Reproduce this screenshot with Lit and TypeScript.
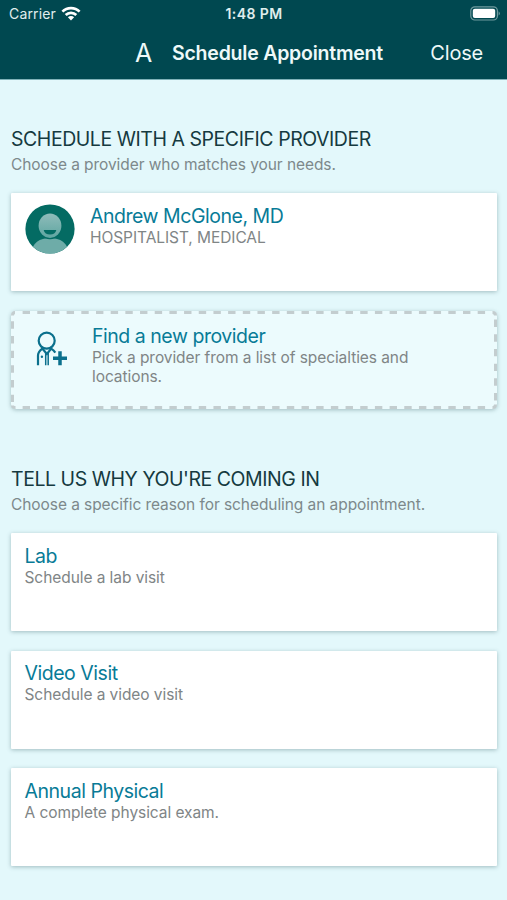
import { LitElement, html, css, svg, nothing } from "lit";
import { customElement, property } from "lit/decorators.js";

interface Reason {
  title: string;
  detail: string;
}

const REASONS: Reason[] = [
  { title: "Lab", detail: "Schedule a lab visit" },
  { title: "Video Visit", detail: "Schedule a video visit" },
  { title: "Annual Physical", detail: "A complete physical exam." },
];

@customElement("status-bar")
class StatusBar extends LitElement {
  static styles = css`
    :host {
      display: grid;
      grid-template-columns: 1fr auto 1fr;
      align-items: center;
      height: 27px;
      padding: 0 8px 0 9px;
      color: #e0eeee;
      font-size: 14px;
      line-height: 20px;
    }
    .left {
      display: flex;
      align-items: center;
      gap: 5px;
      letter-spacing: 0.15px;
    }
    .time {
      font-weight: 600;
      letter-spacing: 0.4px;
    }
    .battery {
      justify-self: end;
      margin-right: -2px;
    }
    svg {
      display: block;
    }
  `;
  render() {
    return html`
      <div class="left">
        <span>Carrier</span>
        <svg width="20" height="15" viewBox="0 0 20 15" fill="none" stroke="#fff" stroke-width="2.7">
          <path d="M1.4 5.6a12.2 12.2 0 0 1 17.2 0" />
          <path d="M4.7 9a7.6 7.6 0 0 1 10.6 0" />
          <path d="M10 14.4L6.9 11.2a4.4 4.4 0 0 1 6.2 0z" fill="#fff" stroke="none" />
        </svg>
      </div>
      <span class="time">1:48 PM</span>
      <svg class="battery" width="31" height="15" viewBox="0 0 31 15">
        <rect x="0.8" y="0.8" width="26.6" height="13.2" rx="4" fill="none" stroke="#6f9a9e" stroke-width="1.2" />
        <rect x="2.8" y="2.8" width="22.4" height="9.2" rx="2" fill="#fff" />
        <path d="M28.6 5.2a2.6 2.6 0 0 1 0 4.4z" fill="#6f9a9e" />
      </svg>
    `;
  }
}

@customElement("nav-header")
class NavHeader extends LitElement {
  static styles = css`
    :host {
      display: flex;
      align-items: center;
      height: 51px;
      padding: 0 24px 1px 135px;
      border-bottom: 1px solid #7fb2b8;
      color: #eef9f9;
      white-space: nowrap;
    }
    .letter {
      width: 37px;
      font-size: 25px;
      line-height: 30px;
    }
    .title {
      font-size: 19.5px;
      font-weight: 600;
      line-height: 24px;
      letter-spacing: -0.22px;
    }
    .close {
      margin-left: auto;
      font-size: 20px;
      line-height: 24px;
      letter-spacing: -0.2px;
    }
  `;
  render() {
    return html`
      <span class="letter">A</span>
      <span class="title">Schedule Appointment</span>
      <span class="close">Close</span>
    `;
  }
}

@customElement("option-card")
class OptionCard extends LitElement {
  static styles = css`
    :host {
      display: flex;
      position: relative;
      box-sizing: border-box;
      height: 98px;
      padding: 11.5px 14px 0 13.5px;
      background: #fff;
      border-radius: 1px;
      box-shadow: 0 1px 4px rgba(60, 100, 105, 0.4);
    }
    :host([dashed]) {
      padding: 13.5px 60px 0 15px;
      background: #ecfbfd;
      border-radius: 5px;
    }
    .outline {
      position: absolute;
      inset: 0;
    }
    .title {
      color: #087b97;
      font-size: 19.5px;
      line-height: 23px;
      letter-spacing: -0.47px;
    }
    .detail {
      color: #808586;
      font-size: 15.5px;
      line-height: 19.6px;
      letter-spacing: -0.07px;
    }
  `;
  @property() heading = "";
  @property() detail = "";
  @property({ type: Boolean, reflect: true }) dashed = false;

  render() {
    return html`
      ${this.dashed
        ? svg`<svg class="outline" width="486" height="98" viewBox="0 0 486 98"
              fill="none" stroke="#c3cdcf" stroke-width="3">
            <path stroke-dasharray="7.4 7.28" d="M11.6 1.500H474.500M11.600 96.500H474.500M1.500 10.300V92M484.500 8.600V91" />
            <path d="M1.500 4.500Q1.500 1.500 4 1.500M481.500 1.500Q484.500 1.500 484.500 4.500M484.500 93.500Q484.500 96.500 481.500 96.500M4.500 96.500Q1.500 96.500 1.500 94.500" />
          </svg>`
        : nothing}
      <slot name="icon"></slot>
      <div class="text">
        <div class="title">${this.heading}</div>
        <div class="detail">${this.detail}</div>
      </div>
    `;
  }
}

@customElement("app-root")
class AppRoot extends LitElement {
  static styles = css`
    :host {
      display: block;
      box-sizing: border-box;
      height: 900px;
      overflow: hidden;
      background: #e3f8fb;
      font-family: Inter, "Liberation Sans", sans-serif;
    }
    .top {
      background: #004850;
      height: 80px;
    }
    section {
      padding: 46.5px 10px 0 11px;
    }
    section + section {
      padding-top: 57.5px;
    }
    h2 {
      margin: 0;
      color: #153a40;
      font-size: 19.5px;
      font-weight: 400;
      line-height: 24px;
      letter-spacing: -0.45px;
    }
    p {
      margin: 4px 0 18.5px;
      color: #7d898b;
      font-size: 15.5px;
      line-height: 20px;
      letter-spacing: -0.07px;
    }
    .cards {
      display: flex;
      flex-direction: column;
      gap: 19.5px;
    }
    .providers {
      gap: 20px;
    }
    .avatar {
      width: 50px;
      height: 50px;
      margin: -0.5px 15.5px 0 0;
      flex: none;
    }
    .find {
      width: 34px;
      height: 36px;
      margin: 5.5px 23px 0 9px;
      flex: none;
    }
  `;
  render() {
    return html`
      <div class="top">
        <status-bar></status-bar>
        <nav-header></nav-header>
      </div>
      <section>
        <h2>SCHEDULE WITH A SPECIFIC PROVIDER</h2>
        <p>Choose a provider who matches your needs.</p>
        <div class="cards providers">
          <option-card heading="Andrew McGlone, MD" detail="HOSPITALIST, MEDICAL">
            <svg slot="icon" class="avatar" viewBox="0 0 50 50">
              <defs>
                <clipPath id="disc"><circle cx="25" cy="25" r="24.6" /></clipPath>
                <linearGradient id="face" x1="0" y1="0" x2="0" y2="1">
                  <stop offset="0" stop-color="#8fbcba" />
                  <stop offset="1" stop-color="#5fa6a1" />
                </linearGradient>
              </defs>
              <g clip-path="url(#disc)">
                <rect width="50" height="50" fill="#046b63" />
                <path d="M6.500 50C6.500 38.500 15 34 25 34S43.500 38.500 43.500 50z" fill="#6eaca8" />
                <ellipse cx="25" cy="22" rx="12.600" ry="13.200" fill="#046b63" />
                <ellipse cx="25" cy="21.700" rx="11.400" ry="12.200" fill="url(#face)" />
                <path d="M18.700 26h12.600c-.6 3-3 4.600-6.300 4.600s-5.700-1.600-6.300-4.600z" fill="#046b63" />
              </g>
            </svg>
          </option-card>
          <option-card
            dashed
            heading="Find a new provider"
            detail="Pick a provider from a list of specialties and locations."
          >
            <svg slot="icon" class="find" viewBox="0 0 34 36" fill="none" stroke="#0b708d" stroke-width="2.200">
              <circle cx="11.700" cy="10.700" r="8" />
              <path d="M3 35.300V25.500C3 22.500 4.600 20.600 7.300 18.600L11.900 24L16.200 18.600C18 19.700 19.300 20.900 20.300 22.600" />
              <path d="M10.700 35.300V23M13.200 35.300V23" stroke-width="1.500" />
              <circle cx="6.900" cy="26.700" r="1.200" fill="#0b708d" stroke="none" />
              <path d="M25 21.300V35.300M18 28.300H32" stroke-width="3.500" />
            </svg>
          </option-card>
        </div>
      </section>
      <section>
        <h2>TELL US WHY YOU'RE COMING IN</h2>
        <p>Choose a specific reason for scheduling an appointment.</p>
        <div class="cards">
          ${REASONS.map(
            (r) => html`<option-card heading=${r.title} detail=${r.detail}></option-card>`
          )}
        </div>
      </section>
    `;
  }
}
